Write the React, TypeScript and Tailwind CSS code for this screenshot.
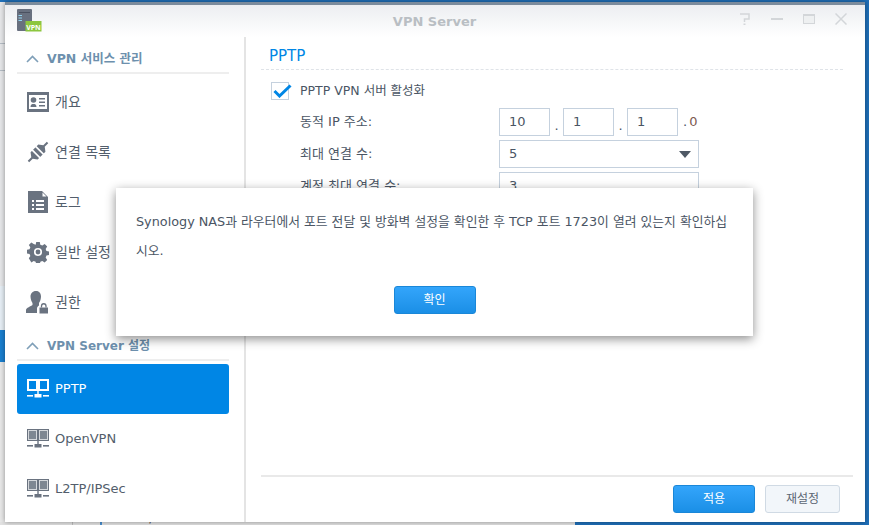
import React from 'react';

const font = "font-['DejaVu_Sans','Noto_Sans_CJK_KR',sans-serif]";

const NetIcon = ({ color, ring, fill }: { color: string; ring: string; fill: string }) => (
  <svg width="22" height="20" viewBox="0 0 22 20">
    <rect x="0" y="0" width="11" height="12" fill={color} />
    <rect x="11" y="0" width="11" height="12" fill={color} />
    <rect x="1" y="1" width="9" height="10" fill={ring} />
    <rect x="12" y="1" width="9" height="10" fill={ring} />
    <rect x="2" y="2" width="7" height="8" fill={fill} />
    <rect x="13" y="2" width="7" height="8" fill={fill} />
    <rect x="10.300" y="12" width="1.400" height="3" fill={color} />
    <rect x="7.500" y="15" width="7" height="3.500" fill={color} />
    <rect x="0" y="16" width="6" height="1.600" fill={color} />
    <rect x="16" y="16" width="6" height="1.600" fill={color} />
  </svg>
);

const CardIcon = () => (
  <svg width="22" height="20" viewBox="0 0 22 20">
    <path fillRule="evenodd" fill="#6a7380" d="M0 0h22v20H0zM2 3v14h18V3z" />
    <circle cx="6.500" cy="8" r="2.800" fill="#6a7380" />
    <path fill="#6a7380" d="M3.500 15c0-2.500 1.500-3 3-3s3 .5 3 3zM12 6h6v1.500h-6zM12 9.500h6V11h-6zM12 13h6v1.500h-6z" />
  </svg>
);

const PlugIcon = () => (
  <svg width="22" height="22" viewBox="0 0 22 22">
    <g transform="rotate(-45 11 11)">
      <path fill="#6a7380" d="M-2.500 10h5l3-4h11l3 4h5v2h-5l-3 4h-11l-3-4h-5z" />
      <rect x="7.500" y="5" width="1.600" height="12" fill="#fff" />
      <rect x="12.500" y="5" width="1.600" height="12" fill="#fff" />
    </g>
  </svg>
);

const LogIcon = () => (
  <svg width="20" height="22" viewBox="0 0 20 22">
    <path fill="#6a7380" d="M0 0h14l6 6v16H0z" />
    <path fill="#fff" d="M14.500 1.500l4 4h-4zM4 9h2v2H4zM8 9h8v2H8zM4 13h2v2H4zM8 13h8v2H8zM4 17h2v2H4zM8 17h8v2H8z" />
  </svg>
);

const GearIcon = () => (
  <svg width="22" height="22" viewBox="0 0 22 22">
    <path fill="#6a7380" fillRule="evenodd" d="M9 0h4l.6 3 2.200.9 2.600-1.700 2.800 2.800-1.700 2.600.9 2.200 3 .6v4l-3 .6-.9 2.200 1.700 2.600-2.800 2.800-2.600-1.700-2.200.9-.6 3H9l-.6-3-2.200-.9-2.600 1.700L.8 18l1.700-2.600-.9-2.200-3-.6v-4l3-.6.9-2.200L.8 3.200 3.600.4l2.600 1.700L8.400 3zM11 6.500a4.500 4.500 0 1 0 0 9 4.500 4.500 0 0 0 0-9z" transform="translate(1.100 1.100) scale(.9)" />
    <circle cx="11" cy="11" r="2.400" fill="#6a7380" />
  </svg>
);

const UserLockIcon = () => (
  <svg width="23" height="23" viewBox="0 0 23 23">
    <path fill="#6a7380" d="M10 0c3.500 0 5 2.500 5 5.500 0 2.500-1 5-2 6.500v2.500c-1 .5-2 1.500-2 3V22H0v-3c0-2.500 5-3.500 6.500-5v-2c-1-1.500-2-4-2-6.500C4.500 2.500 6.500 0 10 0z" />
    <path fill="#6a7380" d="M13.500 16.500h8.500v6h-8.500z" />
    <path fill="none" stroke="#6a7380" strokeWidth="1.300" d="M15.500 16.500v-1.500a2.200 2.200 0 0 1 4.500 0v1.500" />
  </svg>
);

const SectionHeader = ({ label, size }: { label: string; size: string }) => (
  <div className="h-[28px] ml-[12px] mr-[15px] border-b-2 border-[#eeeeee] flex items-center pl-[9px] gap-[8px]">
    <svg width="13" height="8" viewBox="0 0 13 8">
      <path d="M1 7l5.500-5.500L12 7" fill="none" stroke="#7f9fb8" strokeWidth="1.600" />
    </svg>
    <span className={`${size} font-bold text-[#6d90ad]`}>{label}</span>
  </div>
);

const NavItem = ({ icon, label, active, size = 'text-[14px]' }: { icon: React.ReactNode; label: string; active?: boolean; size?: string }) => (
  <div
    className={`h-[50px] ml-[12px] mr-[15px] flex items-center pl-[9px] gap-[6px] rounded-[3px] ${
      active ? 'bg-[#0086e5] text-white' : 'text-[#535e6c]'
    }`}
  >
    <div className="w-[23px] flex justify-center">{icon}</div>
    <span className={size}>{label}</span>
  </div>
);

const IpBox = ({ value }: { value: string }) => (
  <div className="w-[51px] h-[28px] border border-[#c5d1de] flex items-center pl-[9px] text-[13px] text-[#4a5564]">
    {value}
  </div>
);

const Dot = () => <span className="w-[13px] text-center text-[13px] text-[#4a5564] pt-2">.</span>;

export default function App() {
  return (
    <div className={`relative w-[869px] h-[525px] overflow-hidden bg-[#1f6fb8] ${font}`}>
      {/* desktop behind the window */}
      <div className="absolute left-0 top-[2px] w-[5px] h-[523px] bg-[#e6e7e9]" />
      <div className="absolute left-0 top-[43px] w-[5px] h-[1px] bg-[#b4bcc4]" />
      <div className="absolute left-0 top-[70px] w-[5px] h-[1px] bg-[#b4bcc4]" />
      <div className="absolute left-0 top-[286px] w-[5px] h-[44px] bg-[#e6eef5]" />
      <div className="absolute left-0 top-[330px] w-[5px] h-[32px] bg-[#1a7fcf]" />
      <div className="absolute left-0 top-[362px] w-[5px] h-[163px] bg-[#e8e8e8]" />
      <div className="absolute left-0 bottom-0 w-[575px] h-[3px] bg-[#e2e2e2]" />
      <div className="absolute left-[72px] bottom-0 w-[1px] h-[3px] bg-[#bdbdbd]" />
      <div className="absolute left-[92px] top-[521px] w-[18px] h-[1px] bg-[#4a90d0]" />
      <div className="absolute left-[100px] top-[522px] w-[2px] h-[3px] bg-[#4a90d0]" />
      <div className="absolute left-[118px] top-[510px] text-[13px] text-[#555555] leading-[16px]">L2TP/IPSec</div>

      {/* window */}
      <div className="absolute left-[5px] top-[2px] w-[860px] h-[520px] flex flex-col bg-white shadow-[0_0_5px_rgba(0,0,0,0.4)]">
        <div className="h-[3px] bg-[#7b8b9c]" />
        <div className="h-[32px] relative flex items-center justify-center bg-gradient-to-b from-[#eceef1] to-white">
          <span className="text-[13px] font-bold text-[#b9bec3] ml-[-1px] mt-[2px]">VPN Server</span>
          <div className="absolute left-[12px] top-[4px]">
            <svg width="25" height="26" viewBox="0 0 25 26">
              <rect x="0" y="0" width="15" height="22" rx="1" fill="#68707f" />
              <rect x="2" y="3" width="11" height="1" fill="#4b5261" />
              <rect x="1.500" y="6" width="3.500" height="1" fill="#8fd3f0" />
              <rect x="1.500" y="8.500" width="3.500" height="1" fill="#8fd3f0" />
              <rect x="1.500" y="11" width="3.500" height="1" fill="#8fd3f0" />
              <rect x="8.500" y="12" width="16" height="10.500" fill="#8cc63f" />
              <text x="16.500" y="20.500" textAnchor="middle" fontSize="7" fontWeight="700" fill="#fff" fontFamily="Open Sans">VPN</text>
            </svg>
          </div>
          <div className="absolute left-[734px] top-[7px] flex items-center text-[#d3d6d9]">
            <svg width="12" height="14" viewBox="0 0 12 14">
              <path d="M1 2h9v5H5.500v3" fill="none" stroke="#d3d6d9" strokeWidth="1.500" />
              <rect x="4.500" y="11.500" width="2" height="1.500" fill="#d3d6d9" />
            </svg>
            <div className="w-[12px] h-[2px] bg-[#d3d6d9] ml-[20px]" />
            <div className="w-[12px] h-[10px] border border-[#d3d6d9] border-t-2 ml-[20px] bg-[#eef0f1]" />
            <svg className="ml-[20px]" width="12" height="12" viewBox="0 0 12 12">
              <path d="M.5.500l11 11M11.500.500l-11 11" stroke="#d3d6d9" strokeWidth="1.500" />
            </svg>
          </div>
        </div>

        <div className="flex flex-1 min-h-0">
          {/* sidebar */}
          <div className="w-[241px] shrink-0 flex flex-col pt-[9px] border-r-2 border-[#e4e4e4]">
            <SectionHeader label="VPN 서비스 관리" size="text-[12.500px]" />
            <div className="h-[3px]" />
            <NavItem icon={<CardIcon />} label="개요" />
            <NavItem icon={<PlugIcon />} label="연결 목록" />
            <NavItem icon={<LogIcon />} label="로그" />
            <NavItem icon={<GearIcon />} label="일반 설정" />
            <NavItem icon={<UserLockIcon />} label="권한" />
            <div className="h-[6px]" />
            <SectionHeader label="VPN Server 설정" size="text-[12px]" />
            <div className="h-[3px]" />
            <NavItem active size="text-[13px]" icon={<NetIcon color="#ffffff" ring="#ffffff" fill="#0086e5" />} label="PPTP" />
            <NavItem size="text-[13px]" icon={<NetIcon color="#6a7380" ring="#d5d8dc" fill="#7e8792" />} label="OpenVPN" />
            <NavItem size="text-[13px]" icon={<NetIcon color="#6a7380" ring="#d5d8dc" fill="#7e8792" />} label="L2TP/IPSec" />
          </div>

          {/* main */}
          <div className="flex-1 flex flex-col pl-[15px] pr-[12px]">
            <div className="h-[33px] border-b border-dashed border-[#dfe3e8] flex items-center pl-[8px] mr-[10px] text-[15px] text-[#0086e5] pt-[6px]">
              PPTP
            </div>
            <div className="flex-1 pt-[11px] pl-[10px] text-[13px] text-[#4a5564]">
              <div className="h-[20px] flex items-center gap-[11px]">
                <div className="relative w-[18px] h-[18px] border border-[#c5d1de]">
                  <svg className="absolute left-[1px] top-[1px]" width="19" height="14" viewBox="0 0 19 14">
                    <path d="M1.500 7l5 5L17.500 1.500" fill="none" stroke="#0086e5" strokeWidth="3" />
                  </svg>
                </div>
                <span className="text-[12.500px]">PPTP VPN 서버 활성화</span>
              </div>
              <div className="mt-[7px] flex flex-col gap-[4px] pl-[29px]">
                <div className="flex items-center h-[28px]">
                  <span className="w-[199px]">동적 IP 주소:</span>
                  <div className="flex items-center">
                    <IpBox value="10" />
                    <Dot />
                    <IpBox value="1" />
                    <Dot />
                    <IpBox value="1" />
                    <span className="pl-[5px] text-[13px] flex gap-[2px]"><span>.</span><span className="text-[#7d5a50]">0</span></span>
                  </div>
                </div>
                <div className="flex items-center h-[28px]">
                  <span className="w-[199px]">최대 연결 수:</span>
                  <div className="w-[200px] h-[28px] border border-[#c5d1de] flex items-center justify-between pl-[9px] pr-[7px] text-[13px]">
                    5
                    <svg width="12" height="7" viewBox="0 0 12 7"><path d="M0 0h12L6 7z" fill="#4f5965" /></svg>
                  </div>
                </div>
                <div className="flex items-center h-[28px]">
                  <span className="w-[199px]">계정 최대 연결 수:</span>
                  <div className="w-[200px] h-[28px] border border-[#c5d1de] flex items-center pl-[9px] text-[13px]">3</div>
                </div>
              </div>
            </div>
            <div className="h-[47px] border-t-2 border-[#e9e9e9] flex items-start justify-end gap-[10px] pt-[8px] pr-[13px]">
              <button className="w-[82px] h-[28px] rounded-[3px] border border-[#1a87d8] bg-gradient-to-b from-[#33a5fb] to-[#1a8fe6] text-white text-[12px]">적용</button>
              <button className="w-[75px] h-[28px] rounded-[3px] border border-[#d0dae4] bg-[#f2f6fa] text-[#5c6673] text-[12px]">재설정</button>
            </div>
          </div>
        </div>
      </div>

      {/* message box */}
      <div className="absolute left-[116px] top-[188px] w-[637px] h-[148px] bg-white shadow-[0_3px_10px_rgba(0,0,0,0.45)] px-[20px] pt-[19px] flex flex-col items-center">
        <p className="w-full text-[12.800px] leading-[29px] text-[#4a5564]">
          Synology NAS과 라우터에서 포트 전달 및 방화벽 설정을 확인한 후 TCP 포트 1723이 열려 있는지 확인하십시오.
        </p>
        <button className="mt-[21px] w-[82px] h-[28px] rounded-[3px] border border-[#1a87d8] bg-gradient-to-b from-[#33a5fb] to-[#1a8fe6] text-white text-[12px]">확인</button>
      </div>
    </div>
  );
}
